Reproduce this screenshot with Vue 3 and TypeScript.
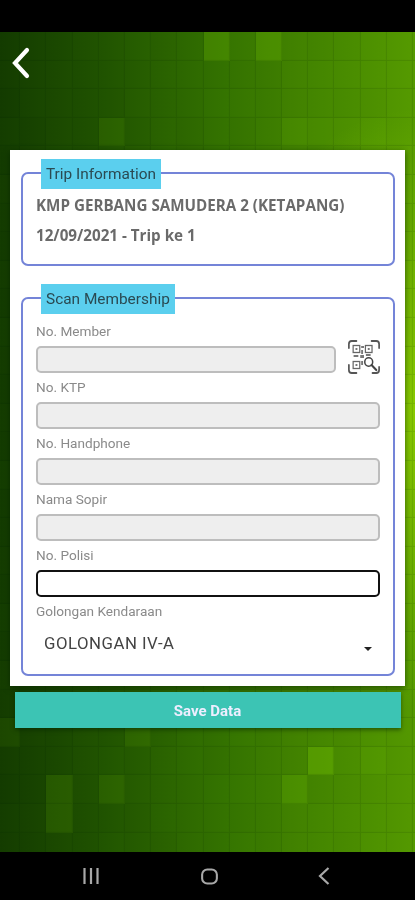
<template>
  <div class="screen">
    <div class="status-bar"></div>

    <main class="page">
      <div class="tiles">
        <span v-for="tile in tiles" :key="tile.id" class="tile" :style="{ background: tile.color }"></span>
      </div>

      <header class="top">
        <svg class="back" width="20" height="32" viewBox="0 0 20 32">
          <path d="M16 3 L4 16 L16 29" fill="none" stroke="#fff" stroke-width="4.2" stroke-linecap="round" stroke-linejoin="miter" />
        </svg>
      </header>

      <section class="card">
        <fieldset class="group trip">
          <legend>Trip Information</legend>
          <p class="trip-line">KMP GERBANG SAMUDERA 2 (KETAPANG)</p>
          <p class="trip-line">12/09/2021 - Trip ke 1</p>
        </fieldset>

        <fieldset class="group scan">
          <legend>Scan Membership</legend>
          <div v-for="field in fields" :key="field.label" class="field">
            <label>{{ field.label }}</label>
            <div class="field-row">
              <input type="text" :class="{ active: field.active }" :disabled="!field.active" />
              <svg v-if="field.scan" class="qr" width="34" height="36" viewBox="0 0 36 36" preserveAspectRatio="none">
                <g fill="none" stroke="#555" stroke-width="1.8" stroke-linecap="round">
                  <path d="M2 9 V5 Q2 2 5 2 H10" />
                  <path d="M26 2 H31 Q34 2 34 5 V9" />
                  <path d="M2 26 V31 Q2 34 5 34 H10" />
                  <path d="M34 28 V31 Q34 34 31 34 H27" />
                </g>
                <g fill="none" stroke="#666" stroke-width="1.3">
                  <rect x="6.5" y="6.5" width="7" height="7" />
                  <rect x="19.5" y="6.5" width="7" height="7" />
                  <rect x="6.5" y="22.5" width="7" height="7" />
                  <path d="M26 26 L31 31" stroke="#444" stroke-width="2.2" stroke-linecap="round" />
                  <circle cx="23" cy="23" r="4.2" stroke="#444" stroke-width="1.6" />
                </g>
                <g fill="#777">
                  <rect x="9" y="9" width="2" height="2" />
                  <rect x="22" y="9" width="2" height="2" />
                  <rect x="9" y="25" width="2" height="2" />
                  <rect x="15" y="7" width="3" height="2" />
                  <rect x="15" y="11" width="2" height="4" />
                  <rect x="7" y="16" width="5" height="2" />
                  <rect x="14" y="16" width="4" height="3" />
                  <rect x="20" y="15" width="5" height="2" />
                  <rect x="15" y="22" width="2" height="4" />
                </g>
              </svg>
            </div>
          </div>
          <div class="field">
            <label>Golongan Kendaraan</label>
            <div class="select">
              <span>GOLONGAN IV-A</span>
              <i class="caret"></i>
            </div>
          </div>
        </fieldset>
      </section>

      <button class="save" type="button">Save Data</button>
    </main>

    <nav class="nav-bar">
      <svg width="18" height="18" viewBox="0 0 18 18">
        <path d="M2.5 1 V17 M9 1 V17 M15.5 1 V17" stroke="#a8a8a8" stroke-width="2.2" fill="none" />
      </svg>
      <svg width="17" height="17" viewBox="0 0 18 18">
        <rect x="1.2" y="1.5" width="15.6" height="15" rx="5.5" fill="none" stroke="#a8a8a8" stroke-width="2.2" />
      </svg>
      <svg width="12" height="18" viewBox="0 0 12 18">
        <path d="M10.5 1 L2 9 L10.5 17" fill="none" stroke="#a8a8a8" stroke-width="2.2" />
      </svg>
    </nav>
  </div>
</template>

<script setup lang="ts">
interface Field {
  label: string
  scan?: boolean
  active?: boolean
}

const fields: Field[] = [
  { label: 'No. Member', scan: true },
  { label: 'No. KTP' },
  { label: 'No. Handphone' },
  { label: 'Nama Sopir' },
  { label: 'No. Polisi', active: true },
]

// tiles that stand out from the background, key is column:row
const highlights: Record<string, number> = {
  '8:0': 0.2,
  '10:0': 0.2,
  '9:0': 0.02,
  '4:3': 0.09,
  '11:3': 0.09,
  '12:3': 0.06,
  '13:3': 0.06,
  '14:3': 0.05,
  '0:24': 0.08,
  '5:24': 0.09,
  '12:25': 0.28,
  '14:25': 0.08,
  '11:26': 0.16,
  '4:26': 0.1,
  '2:26': 0.12,
  '2:27': 0.12,
}

const tiles: { id: string; color: string }[] = []
for (let row = 0; row < 29; row++) {
  for (let col = 0; col < 17; col++) {
    const id = `${col}:${row}`
    const noise = (((col * 37 + row * 61 + col * row * 13) % 17) / 17 - 0.5) * 0.025
    const value = highlights[id] ?? noise
    const color = value >= 0 ? `rgba(130, 210, 0, ${value})` : `rgba(0, 20, 0, ${-value})`
    tiles.push({ id, color })
  }
}
</script>

<style scoped>
.screen {
  width: 415px;
  height: 900px;
  display: flex;
  flex-direction: column;
  background: #000;
  overflow: hidden;
  font-family: Roboto, "Liberation Sans", sans-serif;
  filter: blur(0.4px);
}

.status-bar {
  height: 32px;
  flex: none;
  background: #000;
}

.page {
  position: relative;
  height: 820px;
  flex: none;
  overflow: hidden;
  display: flex;
  flex-direction: column;
  align-items: center;
  background:
    radial-gradient(ellipse 200px 300px at 100% 46%, rgba(140, 205, 0, 0.95), rgba(140, 205, 0, 0) 100%),
    linear-gradient(90deg, #143c00 0%, #215400 25%, #357400 55%, #559a00 100%);
}

.tiles {
  position: absolute;
  top: 0;
  left: -6px;
  display: grid;
  grid-template-columns: repeat(17, 26.2px);
  grid-auto-rows: 28.6px;
}

.tile {
  display: block;
  box-shadow: inset -1px -1px 1px rgba(0, 30, 0, 0.12);
}

.top {
  position: relative;
  width: 100%;
  height: 118px;
  flex: none;
  box-sizing: border-box;
  padding: 15px 0 0 11px;
}

.back {
  display: block;
}

.card {
  position: relative;
  width: 395px;
  height: 536px;
  flex: none;
  box-sizing: border-box;
  padding: 8px 10px 0 11px;
  background: #fff;
  box-shadow: 0 2px 6px rgba(0, 30, 0, 0.6);
}

.group {
  margin: 0;
  padding: 0 13px;
  border: 2px solid #7484d8;
  border-radius: 7px;
  min-width: 0;
}

.group legend {
  margin-left: 5px;
  padding: 0 5px;
  height: 30px;
  line-height: 30px;
  background: #5bcfee;
  color: #2a4a52;
  font-size: 15.4px;
  transform: translateY(1px);
}

.trip {
  height: 108px;
  box-sizing: border-box;
  padding-top: 2px;
}

.trip-line {
  margin: 0;
  height: 30px;
  line-height: 30px;
  color: #6a6a6a;
  font-family: "Open Sans", Roboto, sans-serif;
  font-weight: 700;
  font-size: 15.2px;
  white-space: nowrap;
}

.scan {
  height: 393px;
  margin-top: 17px;
  box-sizing: border-box;
  padding-top: 9px;
}

.field {
  height: 56px;
}

.field label {
  display: block;
  height: 18px;
  line-height: 18px;
  color: #8a8a8a;
  font-size: 13.6px;
}

.field-row {
  display: flex;
  align-items: center;
  gap: 11px;
  margin-top: 6px;
}

input {
  flex: 1;
  min-width: 0;
  height: 27px;
  box-sizing: border-box;
  border: 2px solid #bdbdbd;
  border-radius: 5px;
  background: #eeeeee;
  outline: none;
  padding: 0 6px;
}

input.active {
  background: #fff;
  border-color: #111;
}

.qr {
  flex: none;
  margin: -10px -1px -4px 0;
}

.select {
  display: flex;
  justify-content: space-between;
  align-items: center;
  height: 42px;
  padding: 2px 8px 0;
  color: #444;
  font-size: 16.8px;
  letter-spacing: 0.5px;
}

.caret {
  width: 0;
  height: 0;
  margin-top: 11px;
  border-left: 4px solid transparent;
  border-right: 4px solid transparent;
  border-top: 4px solid #222;
}

.save {
  position: relative;
  width: 386px;
  height: 36px;
  flex: none;
  margin-top: 6px;
  padding-top: 3px;
  border: none;
  background: #3cc4b4;
  color: #eef;
  font-family: Roboto, sans-serif;
  font-weight: 700;
  font-size: 15px;
  box-shadow: 0 2px 4px rgba(0, 30, 0, 0.5);
}

.nav-bar {
  height: 48px;
  flex: none;
  display: flex;
  background: #000;
  align-items: center;
  justify-content: space-between;
  padding: 0 85px 0 82px;
}
</style>
